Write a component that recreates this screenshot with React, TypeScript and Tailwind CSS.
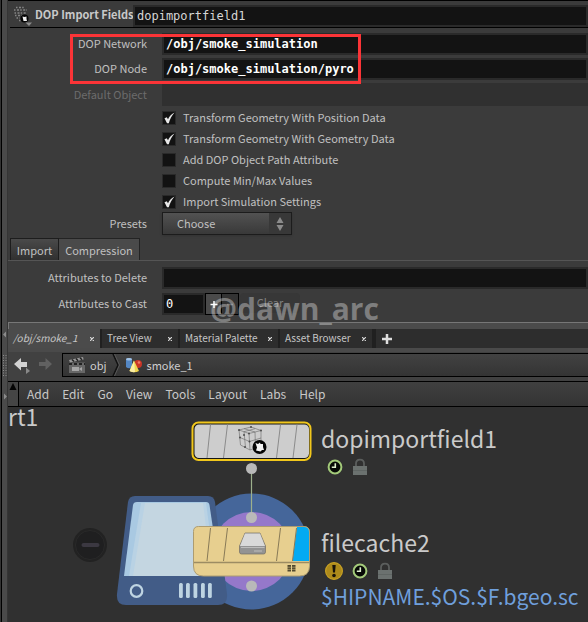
import { useState } from "react";
import type { ReactNode } from "react";

const SANS = "font-['Noto_Sans_CJK_SC','Noto_Sans',sans-serif]";
const MONO = "font-['DejaVu_Sans_Mono',monospace]";
const FIELD = "h-[22px] min-w-0 border-2 border-[#2a2a2a] bg-[#131313] px-[2px] text-xs leading-4 outline-none";

function Row({ id, label, dim, children }: { id: string; label: string; dim?: boolean; children: ReactNode }) {
  return (
    <div className="flex items-center gap-[15px]">
      <label htmlFor={id} className={`w-[139px] shrink-0 pb-[2px] text-right ${dim ? "text-[#6c6c6c]" : "text-[#c0c0c0]"}`}>
        {label}
      </label>
      {children}
    </div>
  );
}

function Check({ id, label, on }: { id: string; label: string; on?: boolean }) {
  const [checked, setChecked] = useState(!!on);
  return (
    <div className="flex h-[21px] items-center gap-[7px] pl-[154px]">
      <span className="relative h-[14px] w-[14px]">
        <input
          id={id}
          type="checkbox"
          checked={checked}
          onChange={(e) => setChecked(e.target.checked)}
          className="block h-[14px] w-[14px] appearance-none border border-[#2a2a2a] bg-[#121212]"
        />
        {checked && (
          <svg viewBox="0 0 14 14" className="pointer-events-none absolute inset-0 h-[14px] w-[14px]">
            <path d="M2.500 7.200 L4.800 6.200 L6 8.200 C7.500 5 9.500 2.800 12.600 1.400 C9.600 4.600 8 8 6.800 12.300 L5 12.300 Z" fill="#e8e8e8" />
          </svg>
        )}
      </span>
      <label htmlFor={id} className="pb-[2px] text-[#c0c0c0]">{label}</label>
    </div>
  );
}

function PaneTab({ title, width, active }: { title: string; width: string; active?: boolean }) {
  return (
    <div
      className={`flex h-[19px] shrink-0 items-center justify-between pr-[6px] text-[10px] ${width} ${
        active ? "bg-[#4b4b4b] pl-[5px] italic" : "border-l-2 border-[#202020] bg-[#2d2d2d] pl-[5px]"
      }`}
    >
      <button type="button" className="whitespace-nowrap pb-px text-[#c6c6c6]">{title}</button>
      <button type="button" aria-label={`Close ${title}`} className="text-[#d8d8d8]">
        <svg viewBox="0 0 4 4" className="h-1 w-1">
          <path d="M0 0 L4 4 M4 0 L0 4" stroke="currentColor" strokeWidth="1.200" />
        </svg>
      </button>
    </div>
  );
}

function Clock() {
  return (
    <svg viewBox="0 0 16 16" className="h-4 w-4">
      <circle cx="8" cy="8" r="6.400" fill="#060906" stroke="#a3ca7a" strokeWidth="2" />
      <path d="M8.300 4.200 V8.300 H4.800" fill="none" stroke="#dff0cd" strokeWidth="1.600" />
    </svg>
  );
}

function Lock() {
  return (
    <svg viewBox="0 0 16 18" className="h-[18px] w-4">
      <path d="M4 8 V5.500 C4 0.200 12 0.200 12 5.500 V8" fill="none" stroke="#5b5e5d" strokeWidth="1.800" />
      <rect x="1" y="8" width="14" height="9" fill="#6b716f" />
      <path d="M1 12.500 H15" stroke="#5f6563" strokeWidth="1" />
    </svg>
  );
}

function Warning() {
  return (
    <svg viewBox="0 0 18 18" className="h-[18px] w-[18px]">
      <circle cx="9" cy="9" r="8.400" fill="#ad8a1b" stroke="#c7a024" strokeWidth="1.200" />
      <path d="M7.300 3 H10.700 L10 10.600 H8 Z" fill="#17120a" />
      <circle cx="9" cy="13.500" r="1.800" fill="#17120a" />
    </svg>
  );
}

function NodeGraph() {
  return (
    <svg viewBox="8 407 312 215" className="absolute left-0 top-0 h-[215px] w-[312px]">
      <circle cx="90" cy="545" r="17" fill="#222" />
      <circle cx="90" cy="545" r="14.500" fill="#1f1f20" stroke="#292929" />
      <rect x="81.500" y="543" width="18" height="4" rx="2" fill="#3b3841" />

      <circle cx="251.500" cy="551.500" r="58" fill="#45669a" />
      <circle cx="251.500" cy="551.500" r="39.500" fill="#9578ca" />

      <path d="M135 496 H208 Q214 496 215 502 L227 594 Q228 605 218 605 H126 Q116 605 117 594 L128 502 Q129 496 135 496 Z" fill="#425c87" />
      <path d="M137 502 H206 Q209 502 209.500 505 L220 576 H124 L133 505 Q133.500 502 137 502 Z" fill="#a9c9e2" />
      <path d="M141 503 H206 L216 576 H129 Z" fill="#b9d2e4" />
      <path d="M145 503 H203 L212 576 H133 Z" fill="#c4d6e1" />
      <circle cx="136.500" cy="591" r="5.800" fill="none" stroke="#bed4e2" strokeWidth="2.200" />
      {[179, 186, 193.500, 201, 208].map((x) => (
        <rect key={x} x={x} y="583" width="3.800" height="15" rx="1.500" fill="#bed4e2" />
      ))}

      <path d="M251.500 468 V517" stroke="#9db08c" strokeWidth="1.200" />
      <circle cx="251.500" cy="468.500" r="5.500" fill="#b9b9b9" />
      <circle cx="251.500" cy="517.500" r="5.500" fill="#b9b9b9" />
      <circle cx="251.500" cy="586" r="5.500" fill="#b9b9b9" />

      <rect x="192.500" y="422.500" width="118" height="37.500" rx="6" fill="#151515" stroke="#f1c71c" strokeWidth="2" />
      <rect x="194.500" y="424.500" width="114.500" height="33.500" rx="4.500" fill="#cdcdcd" />
      <path d="M210.500 424.500 L207 458 M227.500 424.500 L223.500 458 M280.500 424.500 L276.500 458 M297 424.500 L293 458" stroke="#8b8b8b" strokeWidth="1" />
      <path d="M239 430 L249 433.500 L261 430.500 L251 427 Z M239 430 L240.500 445 L250 450 L261 446 L261 430.500 M249 433.500 L250 450 M240 437.500 L249.500 441.500 L261 438 M244 431.700 L245.500 447.500 M255 432 L255.500 448 M244 428.600 L255 432 M255 428.700 L244 431.700" fill="none" stroke="#686868" strokeWidth="0.600" />
      <g fill="#4c4c4c">
        <circle cx="239" cy="430" r="1" /><circle cx="249" cy="433.500" r="1" /><circle cx="261" cy="430.500" r="1" />
        <circle cx="240" cy="437.500" r="1" /><circle cx="249.500" cy="441.500" r="1" /><circle cx="245" cy="447" r="1" />
        <circle cx="251" cy="427" r="1" /><circle cx="244" cy="435" r="1" />
      </g>
      <circle cx="259.500" cy="447" r="7" fill="#050505" />
      <path d="M255.500 443 L258 444 L260 442.500 L260.500 444 H263 V447 L264 450 H262 L260.500 451.500 L256 450.500 L257 447.500 Z" fill="#f3f3f3" />

      <path d="M198.500 526.500 H304 Q309.500 526.500 309.500 532 V566 Q309.500 576 299.500 576 H203.500 Q193.500 576 193.500 566 V531.500 Q193.500 526.500 198.500 526.500 Z" fill="#e7cf8f" stroke="#ad9c70" strokeWidth="1" />
      <path d="M297 527 H304 Q309 527 309 532 V561 H292.500 Z" fill="#03aaf2" />
      <path d="M194 562.500 H309.500" stroke="#9c8c63" strokeWidth="1.500" />
      <path d="M210.500 528 L207 561 M227.500 528 L223.500 561 M280.500 528 L276.500 561 M296.500 528 L292.500 561" stroke="#887a57" strokeWidth="1" />
      <path d="M245 533 H260 L265.500 546 V552 Q265.500 554 263.500 554 H241.500 Q239.500 554 239.500 552 V546 Z" fill="#939393" stroke="#716d64" strokeWidth="0.700" />
      <path d="M245 533.500 H260 L265 546 H240 Z" fill="#d9d9d9" />
      <path d="M241 547.500 H264.500 M254 551 H262" stroke="#c8c8c8" strokeWidth="0.800" />
      <path d="M287.500 565 H291 V571.500 H287.500 Z M292 565 H295.500 V571.500 H292 Z" fill="#51492f" />
      <path d="M287 567.200 H296 M287 569.400 H296" stroke="#e7cf8f" strokeWidth="0.500" />
    </svg>
  );
}

export default function App() {
  return (
    <div className={`flex min-h-screen bg-[#3b3b3b] text-[11px] leading-4 text-[#c0c0c0] ${SANS}`}>
      <aside className="flex w-2 shrink-0 flex-col border-l border-[#333] bg-[#4a4a4a]">
        <div className="flex flex-1 border-l border-black">
          <svg viewBox="2 0 6 622" className="h-[622px] w-[6px]">
            <path d="M7.500 0 V622" stroke="#353535" strokeWidth="1" />
            <path d="M6 331.500 V337.500 L3 334.500 Z M4 393.500 V399.500 L7 396.500 Z" fill="#8b8b8b" />
            <path d="M3.500 355 V376 M6 355 V376" stroke="#8d8d8d" strokeWidth="1" strokeDasharray="1 1.500" />
          </svg>
        </div>
      </aside>

      <main className="flex min-w-0 flex-1 flex-col">
        <section className="relative flex flex-col border-t border-black">
          <header className="ml-[2px] flex h-[27px] items-end border-b border-black">
            <svg viewBox="0 0 20 20" className="mb-[1px] ml-[3px] h-5 w-5 shrink-0">
              <path d="M3 1.500 H12 M1 4 H14 M1.500 7 H13 M2 9.500 H10 M3.500 12 H7 M6 14.500 H9" stroke="#858585" strokeWidth="1.300" strokeDasharray="1.500 1.500 2 1.200" />
              <circle cx="11.500" cy="12.500" r="4" fill="#050505" />
              <path d="M9.500 10.500 L11.500 11 L13.500 10.500 V13 L14 15 H10.500 Z" fill="#f0f0f0" />
              <path d="M12.500 16.500 H19 L16 20 Z" fill="#8c8c8c" />
            </svg>
            <label htmlFor="node-name" className="mb-[5px] ml-[2px] w-[98px] shrink-0 whitespace-nowrap font-bold text-[#c9c9c9]">
              DOP Import Fields
            </label>
            <input id="node-name" defaultValue="dopimportfield1" className={`flex-1 text-[#d6d6d6] ${FIELD} ${MONO}`} />
          </header>

          <div className="mt-[5px] flex flex-col gap-[3px]">
            <Row id="net" label="DOP Network">
              <input id="net" defaultValue="/obj/smoke_simulation" className={`flex-1 font-bold text-white ${FIELD} ${MONO}`} />
            </Row>
            <Row id="node" label="DOP Node">
              <input id="node" defaultValue="/obj/smoke_simulation/pyro" className={`flex-1 font-bold text-white ${FIELD} ${MONO}`} />
            </Row>
            <Row id="object" label="Default Object" dim>
              <input id="object" disabled className="h-[23px] min-w-0 flex-1 bg-[#303030]" />
            </Row>
          </div>
          <div className="pointer-events-none absolute left-[62px] top-[33px] h-[50px] w-[291px] border-3 border-[#fb3437]" />

          <div className="mt-px flex flex-col">
            <Check id="c1" label="Transform Geometry With Position Data" on />
            <Check id="c2" label="Transform Geometry With Geometry Data" on />
            <Check id="c3" label="Add DOP Object Path Attribute" />
            <Check id="c4" label="Compute Min/Max Values" />
            <Check id="c5" label="Import Simulation Settings" on />
          </div>

          <Row id="presets" label="Presets">
            <div className="relative w-[130px]">
              <select
                id="presets"
                className="block h-[23px] w-full appearance-none border border-[#1c1c1c] bg-linear-to-b from-[#525252] to-[#393939] pb-[2px] pl-[14px] text-[#c0c0c0] shadow-sm"
              >
                <option>Choose</option>
              </select>
              <span className="pointer-events-none absolute bottom-px right-px top-px flex w-[22px] items-center justify-center bg-[#383838]">
                <svg viewBox="0 0 8 14" className="h-[14px] w-2">
                  <path d="M0.500 6 L4 0 L7.500 6 Z M0.500 8 L4 14 L7.500 8 Z" fill="#8b8b8b" />
                </svg>
              </span>
            </div>
          </Row>

          <div className="mt-[3px] flex h-[23px] border-b border-[#555] pl-[2px]" role="tablist">
            <button type="button" role="tab" className="w-[49px] border border-b-0 border-[#1d1d1d] bg-linear-to-b from-[#4a4a4a] to-[#303030]">Import</button>
            <button type="button" role="tab" aria-selected="true" className="w-[81px] border-r border-t border-[#232323] bg-[#4a4a4a]">Compression</button>
          </div>

          <div className="mt-[6px] flex flex-col gap-1">
            <Row id="del" label="Attributes to Delete">
              <input id="del" className={`flex-1 text-white ${FIELD} ${MONO}`} />
            </Row>
            <Row id="cast" label="Attributes to Cast">
              <div className="flex">
                <input id="cast" defaultValue="0" className={`w-[43px] text-white ${FIELD} ${MONO}`} />
                <button type="button" aria-label="Add" className="flex w-[17px] items-center justify-center border border-black bg-[#4a4a4a]">
                  <svg viewBox="0 0 8 8" className="h-2 w-2"><path d="M4 1 V8 M0.500 4.500 H7.500" stroke="#fff" strokeWidth="1.500" /></svg>
                </button>
                <button type="button" aria-label="Remove" className="flex w-[17px] items-center justify-center border border-l-0 border-black bg-[#333]">
                  <svg viewBox="0 0 8 8" className="h-2 w-2"><path d="M1 4.500 H7" stroke="#666" strokeWidth="1.500" /></svg>
                </button>
                <button type="button" className="ml-px h-[20px] w-[60px] rounded-sm bg-[#373737] pb-[2px] text-[#808080]">Clear</button>
              </div>
            </Row>
          </div>
          <div className="mt-[7px] h-[7px] border-l border-t border-[#777] bg-[#4b4b4b]" />
          <div className="pointer-events-none absolute bottom-0 left-[202px] z-10 whitespace-nowrap font-['Open_Sans',sans-serif] text-[30px] font-bold leading-10 text-white/35">
            @dawn_arc
          </div>
        </section>

        <section className="flex flex-1 flex-col">
          <nav className="flex items-center bg-[#2d2d2d]" aria-label="Panes">
            <PaneTab title="/obj/smoke_1" width="w-[92px]" active />
            <PaneTab title="Tree View" width="w-[78px]" />
            <PaneTab title="Material Palette" width="w-[100px]" />
            <PaneTab title="Asset Browser" width="w-[94px]" />
            <span className="h-[19px] w-1 bg-[#202020]" />
            <button type="button" aria-label="New tab" className="ml-[6px]">
              <svg viewBox="0 0 10 10" className="h-[10px] w-[10px]"><path d="M5 0 V10 M0 5 H10" stroke="#dedede" strokeWidth="2.500" /></svg>
            </button>
          </nav>

          <div className="flex h-[33px] items-start border-t-4 border-[#4a4a4a] bg-[#414141] pt-px">
            <button type="button" aria-label="Back" className="ml-[6px] flex h-6 items-center">
              <svg viewBox="0 0 16 17" className="h-[17px] w-4">
                <path d="M0 7 L7 1 V5 H13 V10 H7 V13.500 Z" fill="#d2d2d2" />
                <path d="M12 10.500 L16 14 L12 17 Z" fill="#898989" />
              </svg>
            </button>
            <button type="button" aria-label="Forward" className="ml-2 flex h-[22px] items-center">
              <svg viewBox="0 0 14 14" className="h-[14px] w-[14px]">
                <path d="M14 7 L7.500 1 V5 H1 V9 H7.500 V13 Z" fill="#616161" />
              </svg>
            </button>
            <div className="ml-[10px] flex h-[24px] flex-1 items-center border border-r-0 border-black bg-linear-to-b from-[#424242] to-[#343434] text-[#cfcfcf]">
              <button type="button" className="flex items-center gap-1 pl-[5px]">
                <svg viewBox="0 0 18 18" className="h-[18px] w-[18px]">
                  <path d="M1 4 L15 1 L15.600 3.500 L2 6.500 Z" fill="#999" />
                  <path d="M4 3.400 L6 5.500 M8 2.600 L10 4.800 M12 1.800 L14 3.800" stroke="#222" strokeWidth="1.500" />
                  <rect x="1" y="6.500" width="16" height="10.500" fill="#676767" />
                  <path d="M1 8 H17" stroke="#222" strokeWidth="2" strokeDasharray="3 2" />
                  <path d="M4 11 H11 V15 H4 Z M11 13 L14 11 V15 Z" fill="#a6a6a6" />
                </svg>
                <span className="pb-px">obj</span>
              </button>
              <svg viewBox="0 0 8 22" className="ml-[5px] h-[22px] w-2">
                <path d="M1 0 L6 11 L1 22" fill="none" stroke="#111" strokeWidth="1.500" />
                <path d="M2.500 0 L7.500 11 L2.500 22" fill="none" stroke="#575757" strokeWidth="1" />
              </svg>
              <button type="button" className="flex items-center gap-1 pl-[5px]">
                <svg viewBox="0 0 18 16" className="h-4 w-[18px]">
                  <path d="M1 2 Q4 0 7 2 V10 Q4 12.500 1 10 Z" fill="#5487c4" />
                  <ellipse cx="4" cy="2.300" rx="3" ry="1.300" fill="#a4c5e8" />
                  <circle cx="13" cy="7" r="4" fill="#c83528" />
                  <circle cx="14" cy="5.500" r="1.300" fill="#ed7a64" />
                  <path d="M9 3.500 L14 14 Q9 16.500 4.500 14 Z" fill="#f1d64f" />
                  <path d="M9 3.500 L10 15 Q7 15.500 4.500 14 Z" fill="#fbeea4" />
                </svg>
                <span className="pb-px">smoke_1</span>
              </button>
            </div>
          </div>

          <div className="flex h-[26px] border-b border-t border-black bg-linear-to-b from-[#404040] to-[#343434]">
            <button type="button" aria-label="Collapse" className="flex w-[11px] justify-center border-r border-black bg-[#454545] pt-[1px]">
              <svg viewBox="0 0 8 7" className="h-[7px] w-2"><path d="M4 0 L7.500 7 H0.500 Z" fill="#050505" /></svg>
            </button>
            <nav className="flex items-center gap-[13px] pl-2 text-xs text-[#c8c8c8]" aria-label="Menu">
              {["Add", "Edit", "Go", "View", "Tools", "Layout", "Labs", "Help"].map((m) => (
                <button key={m} type="button">{m}</button>
              ))}
            </nav>
          </div>

          <div className="relative min-h-[215px] flex-1 overflow-hidden bg-[#303030] text-[23px] leading-8 text-[#cacaca]">
            <NodeGraph />
            <div className="absolute left-0 top-[-7px]">rt1</div>
            <div className="absolute left-[313px] top-[15px]">
              <div>dopimportfield1</div>
              <div className="flex items-center gap-[9px] pl-[6px] pt-1"><Clock /><Lock /></div>
            </div>
            <div className="absolute left-[313px] top-[119px]">
              <div>filecache2</div>
              <div className="flex items-center gap-[9px] pl-1 pt-1"><Warning /><Clock /><Lock /></div>
              <div className="text-[21px] text-[#6f9fdc]">$HIPNAME.$OS.$F.bgeo.sc</div>
            </div>
          </div>
        </section>
      </main>
    </div>
  );
}
